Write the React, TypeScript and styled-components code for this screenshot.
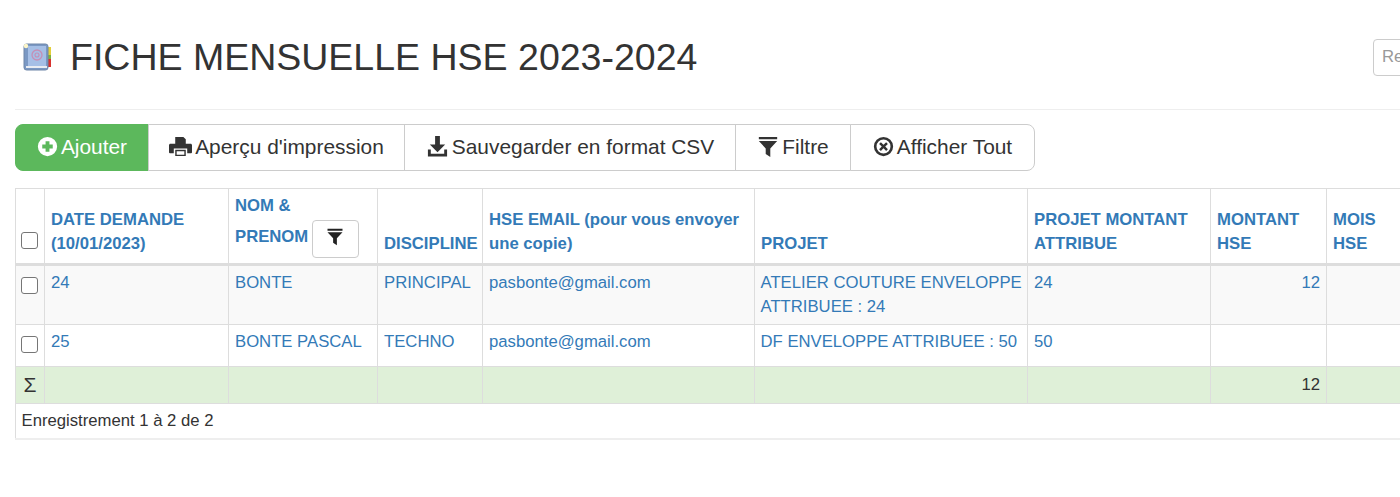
import { FC, ReactNode } from 'react'
import styled, { createGlobalStyle } from 'styled-components'

const GlobalStyle = createGlobalStyle`
  * {
    box-sizing: border-box;
  }

  html, body {
    margin: 0;
    padding: 0;
    background: #fff;
    overflow: hidden;
  }

  body {
    width: 1400px;
    height: 497px;
    font-family: "Liberation Sans", Arial, sans-serif;
    font-size: 16.7px;
    color: #333;
  }
`;

const Page = styled.div`
  width: 1588px;
  padding: 0 15px;
`;

const PageHeader = styled.header`
  display: flex;
  align-items: center;
  justify-content: space-between;
  height: 110px;
  padding-top: 5px;
  border-bottom: 1px solid #eee;
`;

const TitleGroup = styled.div`
  display: flex;
  align-items: center;
  gap: 18px;
  padding-left: 7px;
`;

const Title = styled.h1`
  margin: 0;
  font-size: 37.5px;
  font-weight: 400;
  line-height: 42px;
  color: #333;
`;

const SearchInput = styled.input`
  width: 200px;
  height: 37px;
  padding: 6px 8px;
  border: 1px solid #ccc;
  border-radius: 4px;
  font: 16.7px "Liberation Sans", Arial, sans-serif;

  &::placeholder {
    color: #999;
  }
`;

const Toolbar = styled.div`
  display: inline-flex;
  margin-top: 14px;
  height: 47px;
`;

const ToolButton = styled.button<{ $primary?: boolean; $width: number }>`
  display: flex;
  align-items: center;
  justify-content: center;
  gap: 3px;
  width: ${({ $width }) => $width}px;
  height: 47px;
  margin-left: -1px;
  padding: 0 0 2px;
  background: ${({ $primary }) => ($primary ? '#5cb85c' : '#fff')};
  border: 1px solid ${({ $primary }) => ($primary ? '#5cb85c' : '#ccc')};
  color: ${({ $primary }) => ($primary ? '#fff' : '#333')};
  font: 20.9px "Liberation Sans", Arial, sans-serif;

  &:first-child {
    margin-left: 0;
    border-radius: 8px 0 0 8px;
  }

  &:last-child {
    border-radius: 0 8px 8px 0;
  }
`;

const DataTable = styled.table`
  table-layout: fixed;
  width: 1558px;
  margin-top: 17px;
  border-collapse: collapse;
  font-size: 16.7px;
`;

const Col = styled.col<{ $width: number }>`
  width: ${({ $width }) => $width}px;
`;

const HeadCell = styled.th`
  padding: 5px 4px 7px 6px;
  border: 1px solid #ddd;
  border-bottom: 3px solid #ddd;
  vertical-align: bottom;
  text-align: left;
  font-size: 16.7px;
  font-weight: 700;
  line-height: 24px;
  color: #337ab7;
`;

const NameHeadCell = styled(HeadCell)`
  padding-bottom: 5px;
`;

const BodyRow = styled.tr<{ $striped?: boolean }>`
  height: 42px;
  background: ${({ $striped }) => ($striped ? '#f9f9f9' : '#fff')};
`;

const Cell = styled.td<{ $right?: boolean }>`
  padding: 5px 6px 5px;
  border: 1px solid #ddd;
  vertical-align: top;
  line-height: 24px;
  color: #337ab7;
  text-align: ${({ $right }) => ($right ? 'right' : 'left')};
`;

const ProjectCell = styled(Cell)`
  padding: 5px 3px 5px 5.5px;
`;

const TotalRow = styled.tr`
  background: #dff0d8;
  height: 37px;
`;

const TotalCell = styled.td<{ $right?: boolean }>`
  padding: 0 6px;
  border: 1px solid #ddd;
  color: #333;
  text-align: ${({ $right }) => ($right ? 'right' : 'left')};
`;

const SigmaCell = styled(TotalCell)`
  padding: 0;
  text-align: center;
  font-size: 21px;
`;

const FooterCell = styled.td`
  height: 35px;
  padding: 0 5.5px;
  border: 1px solid #ddd;
  border-bottom-width: 2px;
  border-bottom-color: #eee;
  color: #333;
`;

const CheckCell = styled.td`
  padding: 0 2px 0 0;
  border: 1px solid #ddd;
  text-align: center;
  vertical-align: top;
`;

const HeadCheckCell = styled.th`
  padding: 0 2px 14px 0;
  border: 1px solid #ddd;
  border-bottom: 3px solid #ddd;
  vertical-align: bottom;
  text-align: center;
  line-height: 0;
`;

const CheckBox = styled.span<{ $offset?: boolean }>`
  display: inline-block;
  width: 17px;
  height: 17px;
  margin-top: ${({ $offset }) => ($offset ? '11px' : '0')};
  border: 1px solid #767676;
  border-radius: 3px;
  background: #fff;
  vertical-align: top;
`;

const SortButton = styled.button`
  display: inline-flex;
  align-items: center;
  justify-content: center;
  width: 47px;
  height: 38px;
  margin: 2px 0 0 4px;
  padding: 0 1px 4px 0;
  background: #fff;
  border: 1px solid #ccc;
  border-radius: 4px;
  color: #222;
  vertical-align: middle;
`;

const Svg = styled.svg<{ $size: number }>`
  display: block;
  flex: none;
  width: ${({ $size }) => $size}px;
  height: ${({ $size }) => $size}px;
  fill: currentColor;
`;

const BookSvg = styled.svg`
  display: block;
  flex: none;
`;

const Icon: FC<{ size?: number; children: ReactNode }> = ({ size = 21, children }) => (
  <Svg $size={size} viewBox="0 0 24 24">{children}</Svg>
)

const PlusIcon = () => (
  <Icon>
    <path fillRule="evenodd" d="M12 1a11 11 0 1 1 0 22 11 11 0 0 1 0-22zM9.800 6v3.800H6v4.400h3.800V18h4.400v-3.800H18V9.800h-3.800V6z" />
  </Icon>
)

const PrintIcon = () => (
  <Icon size={23}>
    <path fillRule="evenodd" d="M6.500 2h8.500l2.500 2.500V9H6.500zM0 10.500C0 9.700.7 9 1.500 9h21c.8 0 1.500.7 1.500 1.500V18c0 .6-.4 1-1 1h-4v-5H5v5H1c-.6 0-1-.4-1-1zM6.500 15.500h11V22h-11zM8 17v3.500h8V17z" />
  </Icon>
)

const DownloadIcon = () => (
  <Icon size={23}>
    <path d="M9.500 1h5v9h5.500l-8 8-8-8h5.500zM2 15h3v4.500h14V15h3v7.500H2z" />
  </Icon>
)

const FilterIcon: FC<{ size?: number }> = ({ size = 22 }) => (
  <Icon size={size}>
    <path d="M2 1h20v2.500H2zM2 5.500h20l-7.500 8V23l-5-3.500v-6z" />
  </Icon>
)

const ClearIcon = () => (
  <Icon>
    <path fillRule="evenodd" d="M12 1a11 11 0 1 1 0 22 11 11 0 0 1 0-22zm0 3a8 8 0 1 0 0 16 8 8 0 0 0 0-16zM9 7l3 3 3-3 2 2-3 3 3 3-2 2-3-3-3 3-2-2 3-3-3-3z" />
  </Icon>
)

const BookIcon = () => (
  <BookSvg width="30" height="32" viewBox="0 0 30 32">
    <rect x="24" y="6" width="5" height="9" fill="#e3cf3a" />
    <rect x="24" y="14" width="5" height="4" fill="#7fb13a" />
    <rect x="24" y="18" width="5" height="8" fill="#d8322e" />
    <rect x="2" y="3" width="24" height="26" rx="2.500" fill="#7a98c4" stroke="#6f86a8" />
    <rect x="6" y="5" width="18" height="20" fill="#a5bfe6" />
    <circle cx="15" cy="14" r="5" fill="none" stroke="#c58fb6" strokeWidth="1.300" />
    <circle cx="15" cy="14" r="2" fill="none" stroke="#c58fb6" strokeWidth="1.100" />
    <rect x="4" y="25" width="21" height="2" fill="#e8ecf2" />
    <circle cx="4" cy="5" r="2.200" fill="#fdf6c8" />
  </BookSvg>
)

const columns = [29, 184, 149, 105, 272, 273, 183, 116, 115, 132]

const rows = [
  { id: '24', name: 'BONTE', discipline: 'PRINCIPAL', email: 'pasbonte@gmail.com', project: 'ATELIER COUTURE ENVELOPPE ATTRIBUEE : 24', amount: '24', hse: '12' },
  { id: '25', name: 'BONTE PASCAL', discipline: 'TECHNO', email: 'pasbonte@gmail.com', project: 'DF ENVELOPPE ATTRIBUEE : 50', amount: '50', hse: '' },
]

export default function App() {
  return (
    <Page>
      <GlobalStyle />
      <PageHeader>
        <TitleGroup>
          <BookIcon />
          <Title>FICHE MENSUELLE HSE 2023-2024</Title>
        </TitleGroup>
        <SearchInput placeholder="Recherche" />
      </PageHeader>

      <Toolbar>
        <ToolButton $primary $width={134}><PlusIcon />Ajouter</ToolButton>
        <ToolButton $width={257}><PrintIcon />Aperçu d'impression</ToolButton>
        <ToolButton $width={332}><DownloadIcon />Sauvegarder en format CSV</ToolButton>
        <ToolButton $width={116}><FilterIcon />Filtre</ToolButton>
        <ToolButton $width={185}><ClearIcon />Afficher Tout</ToolButton>
      </Toolbar>

      <DataTable>
        <colgroup>
          {columns.map((width, index) => <Col key={index} $width={width} />)}
        </colgroup>
        <thead>
          <tr>
            <HeadCheckCell><CheckBox /></HeadCheckCell>
            <HeadCell>DATE DEMANDE (10/01/2023)</HeadCell>
            <NameHeadCell>
              NOM &amp;<br />PRENOM
              <SortButton><FilterIcon size={18} /></SortButton>
            </NameHeadCell>
            <HeadCell>DISCIPLINE</HeadCell>
            <HeadCell>HSE EMAIL (pour vous envoyer une copie)</HeadCell>
            <HeadCell>PROJET</HeadCell>
            <HeadCell>PROJET MONTANT ATTRIBUE</HeadCell>
            <HeadCell>MONTANT HSE</HeadCell>
            <HeadCell>MOIS<br />HSE</HeadCell>
            <HeadCell />
          </tr>
        </thead>
        <tbody>
          {rows.map((row, index) => (
            <BodyRow key={row.id} $striped={index === 0}>
              <CheckCell><CheckBox $offset /></CheckCell>
              <Cell>{row.id}</Cell>
              <Cell>{row.name}</Cell>
              <Cell>{row.discipline}</Cell>
              <Cell>{row.email}</Cell>
              <ProjectCell>{row.project}</ProjectCell>
              <Cell>{row.amount}</Cell>
              <Cell $right>{row.hse}</Cell>
              <Cell />
              <Cell />
            </BodyRow>
          ))}
          <TotalRow>
            <SigmaCell>Σ</SigmaCell>
            <TotalCell />
            <TotalCell />
            <TotalCell />
            <TotalCell />
            <TotalCell />
            <TotalCell />
            <TotalCell $right>12</TotalCell>
            <TotalCell />
            <TotalCell />
          </TotalRow>
          <tr>
            <FooterCell colSpan={10}>Enregistrement 1 à 2 de 2</FooterCell>
          </tr>
        </tbody>
      </DataTable>
    </Page>
  )
}
